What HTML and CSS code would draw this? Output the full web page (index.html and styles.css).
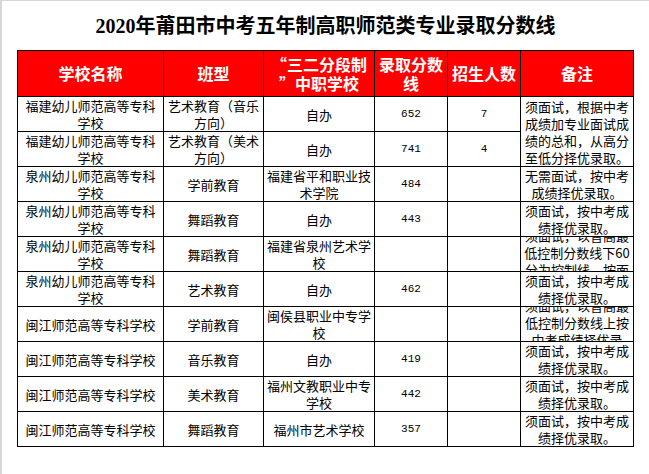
FILE: index.html
```html
<!DOCTYPE html>
<html lang="zh-CN">
<head>
<meta charset="utf-8">
<title>2020年莆田市中考五年制高职师范类专业录取分数线</title>
<link rel="stylesheet" href="styles.css">
</head>
<body>
<div class="page">
  <h1 class="title">2020年莆田市中考五年制高职师范类专业录取分数线</h1>
  <table class="score-table">
    <colgroup>
      <col class="c-school">
      <col class="c-class">
      <col class="c-mid">
      <col class="c-score">
      <col class="c-count">
      <col class="c-note">
    </colgroup>
    <thead>
      <tr>
        <th>学校名称</th>
        <th>班型</th>
        <th>“三二分段制<br>”中职学校</th>
        <th>录取分数线</th>
        <th>招生人数</th>
        <th>备注</th>
      </tr>
    </thead>
    <tbody>
      <tr>
        <td>福建幼儿师范高等专科学校</td>
        <td>艺术教育（音乐方向）</td>
        <td>自办</td>
        <td class="num">652</td>
        <td class="num">7</td>
        <td rowspan="2" class="note">须面试，根据中考成绩加专业面试成绩的总和，从高分至低分择优录取。</td>
      </tr>
      <tr>
        <td>福建幼儿师范高等专科学校</td>
        <td>艺术教育（美术方向）</td>
        <td>自办</td>
        <td class="num">741</td>
        <td class="num">4</td>
      </tr>
      <tr>
        <td>泉州幼儿师范高等专科学校</td>
        <td>学前教育</td>
        <td>福建省平和职业技术学院</td>
        <td class="num">484</td>
        <td class="num"></td>
        <td class="note">无需面试，按中考成绩择优录取。</td>
      </tr>
      <tr>
        <td>泉州幼儿师范高等专科学校</td>
        <td>舞蹈教育</td>
        <td>自办</td>
        <td class="num">443</td>
        <td class="num"></td>
        <td class="note">须面试，按中考成绩择优录取。</td>
      </tr>
      <tr>
        <td>泉州幼儿师范高等专科学校</td>
        <td>舞蹈教育</td>
        <td>福建省泉州艺术学校</td>
        <td class="num"></td>
        <td class="num"></td>
        <td class="note clip"><div class="clip-box"><div class="clip-text">须面试，以普高最低控制分数线下60分为控制线，按面试成绩择优录取。</div></div></td>
      </tr>
      <tr>
        <td>泉州幼儿师范高等专科学校</td>
        <td>艺术教育</td>
        <td>自办</td>
        <td class="num">462</td>
        <td class="num"></td>
        <td class="note">须面试，按中考成绩择优录取。</td>
      </tr>
      <tr>
        <td>闽江师范高等专科学校</td>
        <td>学前教育</td>
        <td>闽侯县职业中专学校</td>
        <td class="num"></td>
        <td class="num"></td>
        <td class="note clip"><div class="clip-box"><div class="clip-text">须面试，以普高最低控制分数线上按中考成绩择优录取。</div></div></td>
      </tr>
      <tr>
        <td>闽江师范高等专科学校</td>
        <td>音乐教育</td>
        <td>自办</td>
        <td class="num">419</td>
        <td class="num"></td>
        <td class="note">须面试，按中考成绩择优录取。</td>
      </tr>
      <tr>
        <td>闽江师范高等专科学校</td>
        <td>美术教育</td>
        <td>福州文教职业中专学校</td>
        <td class="num">442</td>
        <td class="num"></td>
        <td class="note">须面试，按中考成绩择优录取。</td>
      </tr>
      <tr>
        <td>闽江师范高等专科学校</td>
        <td>舞蹈教育</td>
        <td>福州市艺术学校</td>
        <td class="num">357</td>
        <td class="num"></td>
        <td class="note">须面试，按中考成绩择优录取。</td>
      </tr>
    </tbody>
  </table>
</div>
</body>
</html>
```

FILE: styles.css
```css
html, body {
  margin: 0;
  padding: 0;
  background: #ffffff;
}

body {
  font-family: "Noto Sans CJK SC", "Noto Sans", sans-serif;
  color: #000000;
}

.page {
  box-sizing: border-box;
  width: 649px;
  height: 474px;
  border-top: 1px solid #d6d6d6;
  border-left: 2px solid #d6d6d6;
  overflow: hidden;
}

.title {
  margin: 0;
  padding-top: 13px;
  height: 36px;
  line-height: 24px;
  font-size: 20px;
  font-weight: bold;
  text-align: center;
  font-family: "Liberation Serif", "Noto Sans CJK SC", serif;
  letter-spacing: 0;
}

.score-table {
  margin-left: 15px;
  width: 616px;
  table-layout: fixed;
  border-collapse: collapse;
  border: 1px solid #000;
}

.c-school { width: 146px; }
.c-class { width: 100px; }
.c-mid { width: 111px; }
.c-score { width: 73px; }
.c-count { width: 73px; }
.c-note { width: 113px; }

.score-table th {
  height: 45px;
  padding: 0 2px;
  background: #ff0000;
  color: #ffffff;
  font-size: 16px;
  font-weight: bold;
  line-height: 19px;
  border: 1px solid #000;
  text-align: center;
  vertical-align: middle;
}

.score-table td {
  height: 34px;
  padding: 0 2px;
  font-size: 13px;
  line-height: 17px;
  border: 1px solid #000;
  text-align: center;
  vertical-align: middle;
}

.score-table td.num {
  font-family: "Liberation Mono", monospace;
  font-size: 11px;
}

.score-table td.clip {
  padding: 0 2px;
}

.clip-box {
  height: 34px;
  overflow: hidden;
}

.clip-text {
  margin-top: -10px;
}
```
